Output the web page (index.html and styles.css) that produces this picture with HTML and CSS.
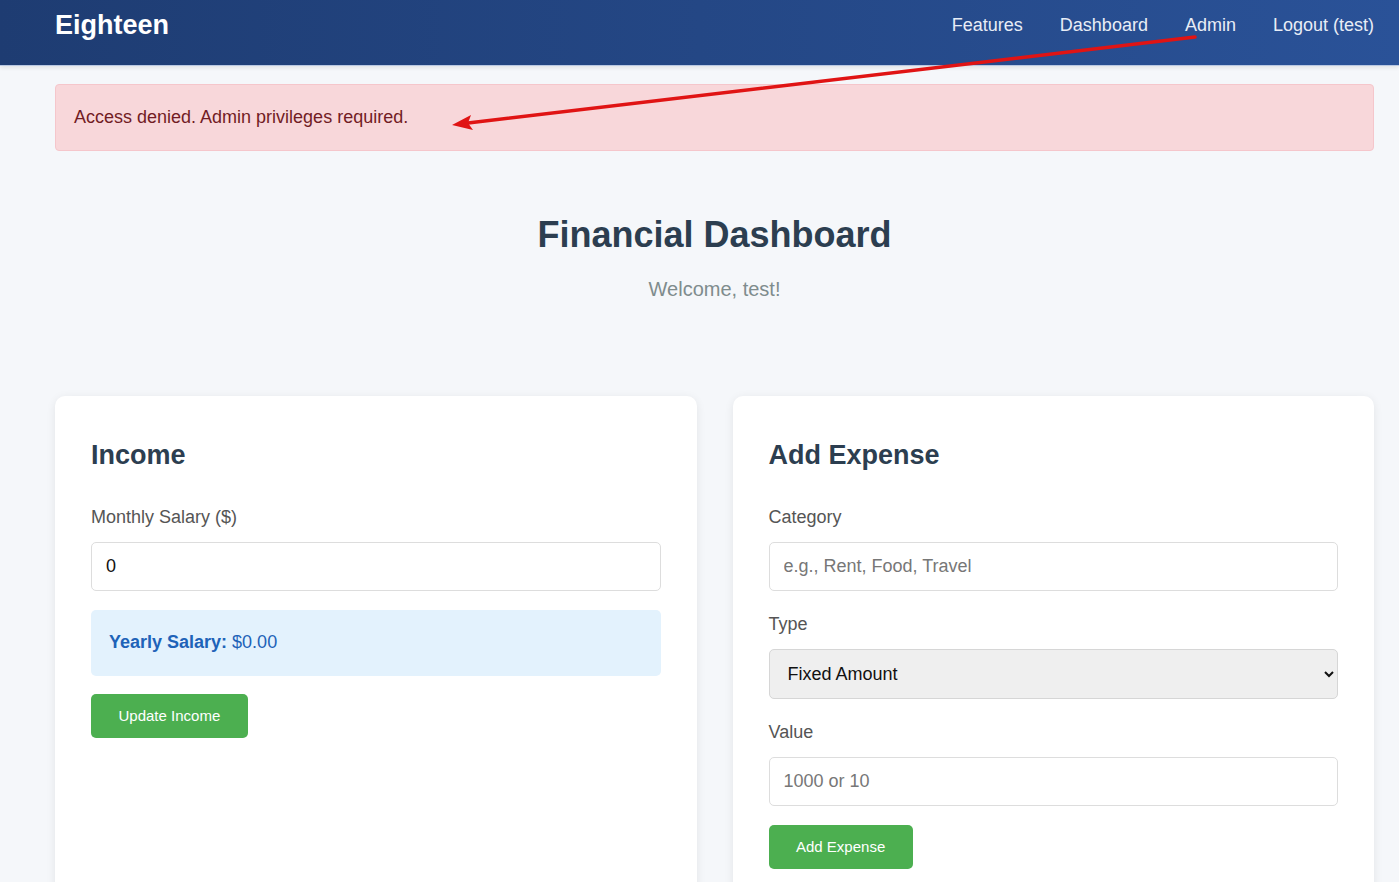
FILE: index.html
```html
<!DOCTYPE html>
<html lang="en">
<head>
  <meta charset="UTF-8">
  <meta name="viewport" content="width=device-width, initial-scale=1.0">
  <title>Eighteen - Financial Dashboard</title>
  <link rel="stylesheet" href="styles.css">
</head>
<body>
  <nav class="navbar">
    <div class="nav-inner">
      <a href="#" class="brand">Eighteen</a>
      <div class="nav-links">
        <a href="#">Features</a>
        <a href="#">Dashboard</a>
        <a href="#">Admin</a>
        <a href="#">Logout (test)</a>
      </div>
    </div>
  </nav>

  <main class="container">
    <div class="alert alert-error">Access denied. Admin privileges required.</div>

    <div class="page-header">
      <h1>Financial Dashboard</h1>
      <p>Welcome, test!</p>
    </div>

    <div class="cards">
      <section class="card">
        <h2>Income</h2>
        <div class="form-group">
          <label for="salary">Monthly Salary ($)</label>
          <input type="number" id="salary" value="0">
        </div>
        <div class="yearly-box"><strong>Yearly Salary:</strong> $0.00</div>
        <button class="btn">Update Income</button>
      </section>

      <section class="card">
        <h2>Add Expense</h2>
        <div class="form-group">
          <label for="category">Category</label>
          <input type="text" id="category" placeholder="e.g., Rent, Food, Travel">
        </div>
        <div class="form-group">
          <label for="type">Type</label>
          <select id="type">
            <option>Fixed Amount</option>
            <option>Percentage</option>
          </select>
        </div>
        <div class="form-group">
          <label for="value">Value</label>
          <input type="number" id="value" placeholder="1000 or 10">
        </div>
        <button class="btn">Add Expense</button>
      </section>
    </div>
  </main>

  <!-- annotation arrow -->
  <svg class="annotation" width="1399" height="200" viewBox="0 0 1399 200">
    <line x1="1195" y1="37" x2="468" y2="123" stroke="#e01414" stroke-width="3.5" stroke-linecap="round"/>
    <polygon points="452,125 473,130 468,123 471,115" fill="#e01414"/>
  </svg>
</body>
</html>
```

FILE: styles.css
```css
body {
  font-family: "Liberation Sans", Arial, sans-serif;
  margin: 0;
  padding: 0;
  background-color: #f5f7fa;
  color: #333;
}

.navbar {
  background: linear-gradient(90deg, #1e3c72, #2a5298);
  height: 66px;
  box-shadow: 0 2px 4px rgba(0, 0, 0, 0.08);
  border-bottom: 1px solid #b9c8e2;
  box-sizing: border-box;
}

.nav-inner {
  display: flex;
  justify-content: space-between;
  align-items: center;
  margin: 0 25px 0 55px;
  height: 50px;
}

.brand {
  color: #fff;
  font-size: 27px;
  font-weight: bold;
  text-decoration: none;
}

.nav-links {
  display: flex;
  gap: 37px;
}

.nav-links a {
  color: #e8edf6;
  font-size: 18px;
  text-decoration: none;
}

.container {
  margin: 0 25px 0 55px;
}

.alert {
  margin-top: 18px;
  padding: 22px 18px;
  font-size: 18px;
  line-height: 21px;
  border-radius: 4px;
}

.alert-error {
  background-color: #f8d7da;
  border: 1px solid #f5c6cb;
  color: #721c24;
}

.page-header {
  text-align: center;
  margin-top: 63px;
}

.page-header h1 {
  margin: 0;
  font-size: 36px;
  line-height: 41px;
  color: #2c3e50;
}

.page-header p {
  margin: 23px 0 0;
  font-size: 20px;
  line-height: 23px;
  color: #7f8c8d;
}

.cards {
  display: grid;
  grid-template-columns: 1fr 1fr;
  gap: 36px;
  margin-top: 95px;
}

.card {
  background: #fff;
  border-radius: 10px;
  box-shadow: 0 2px 10px rgba(0, 0, 0, 0.08);
  padding: 36px 36px 36px;
}

.card h2 {
  margin: 7px 0 32px;
  font-size: 27px;
  line-height: 32px;
  color: #2c3e50;
}

.form-group {
  margin-bottom: 19px;
}

.form-group label {
  display: block;
  font-size: 18px;
  line-height: 28px;
  margin-bottom: 11px;
  color: #555;
}

.form-group input,
.form-group select {
  width: 100%;
  box-sizing: border-box;
  font-family: "Liberation Sans", Arial, sans-serif;
  font-size: 18px;
  line-height: 21px;
  padding: 13px 14px;
  border: 1px solid #ddd;
  border-radius: 5px;
  color: #111;
  background: #fff;
}

.form-group select {
  height: 50px;
  padding: 0 14px;
  background-color: #efefef;
  border-color: #d6d6d6;
}

.form-group input::placeholder {
  color: #777;
}

.yearly-box {
  background-color: #e3f2fd;
  color: #1e63b8;
  font-size: 18px;
  line-height: 21px;
  padding: 22px 18px 23px;
  border-radius: 5px;
  margin-bottom: 18px;
}

.btn {
  background-color: #4caf50;
  color: #fff;
  border: none;
  border-radius: 5px;
  font-family: "Liberation Sans", Arial, sans-serif;
  font-size: 15px;
  line-height: 18px;
  padding: 13px 27.5px;
  cursor: pointer;
}

.btn:hover {
  background-color: #43a047;
}

.annotation {
  position: absolute;
  top: 0;
  left: 0;
  pointer-events: none;
}
```
